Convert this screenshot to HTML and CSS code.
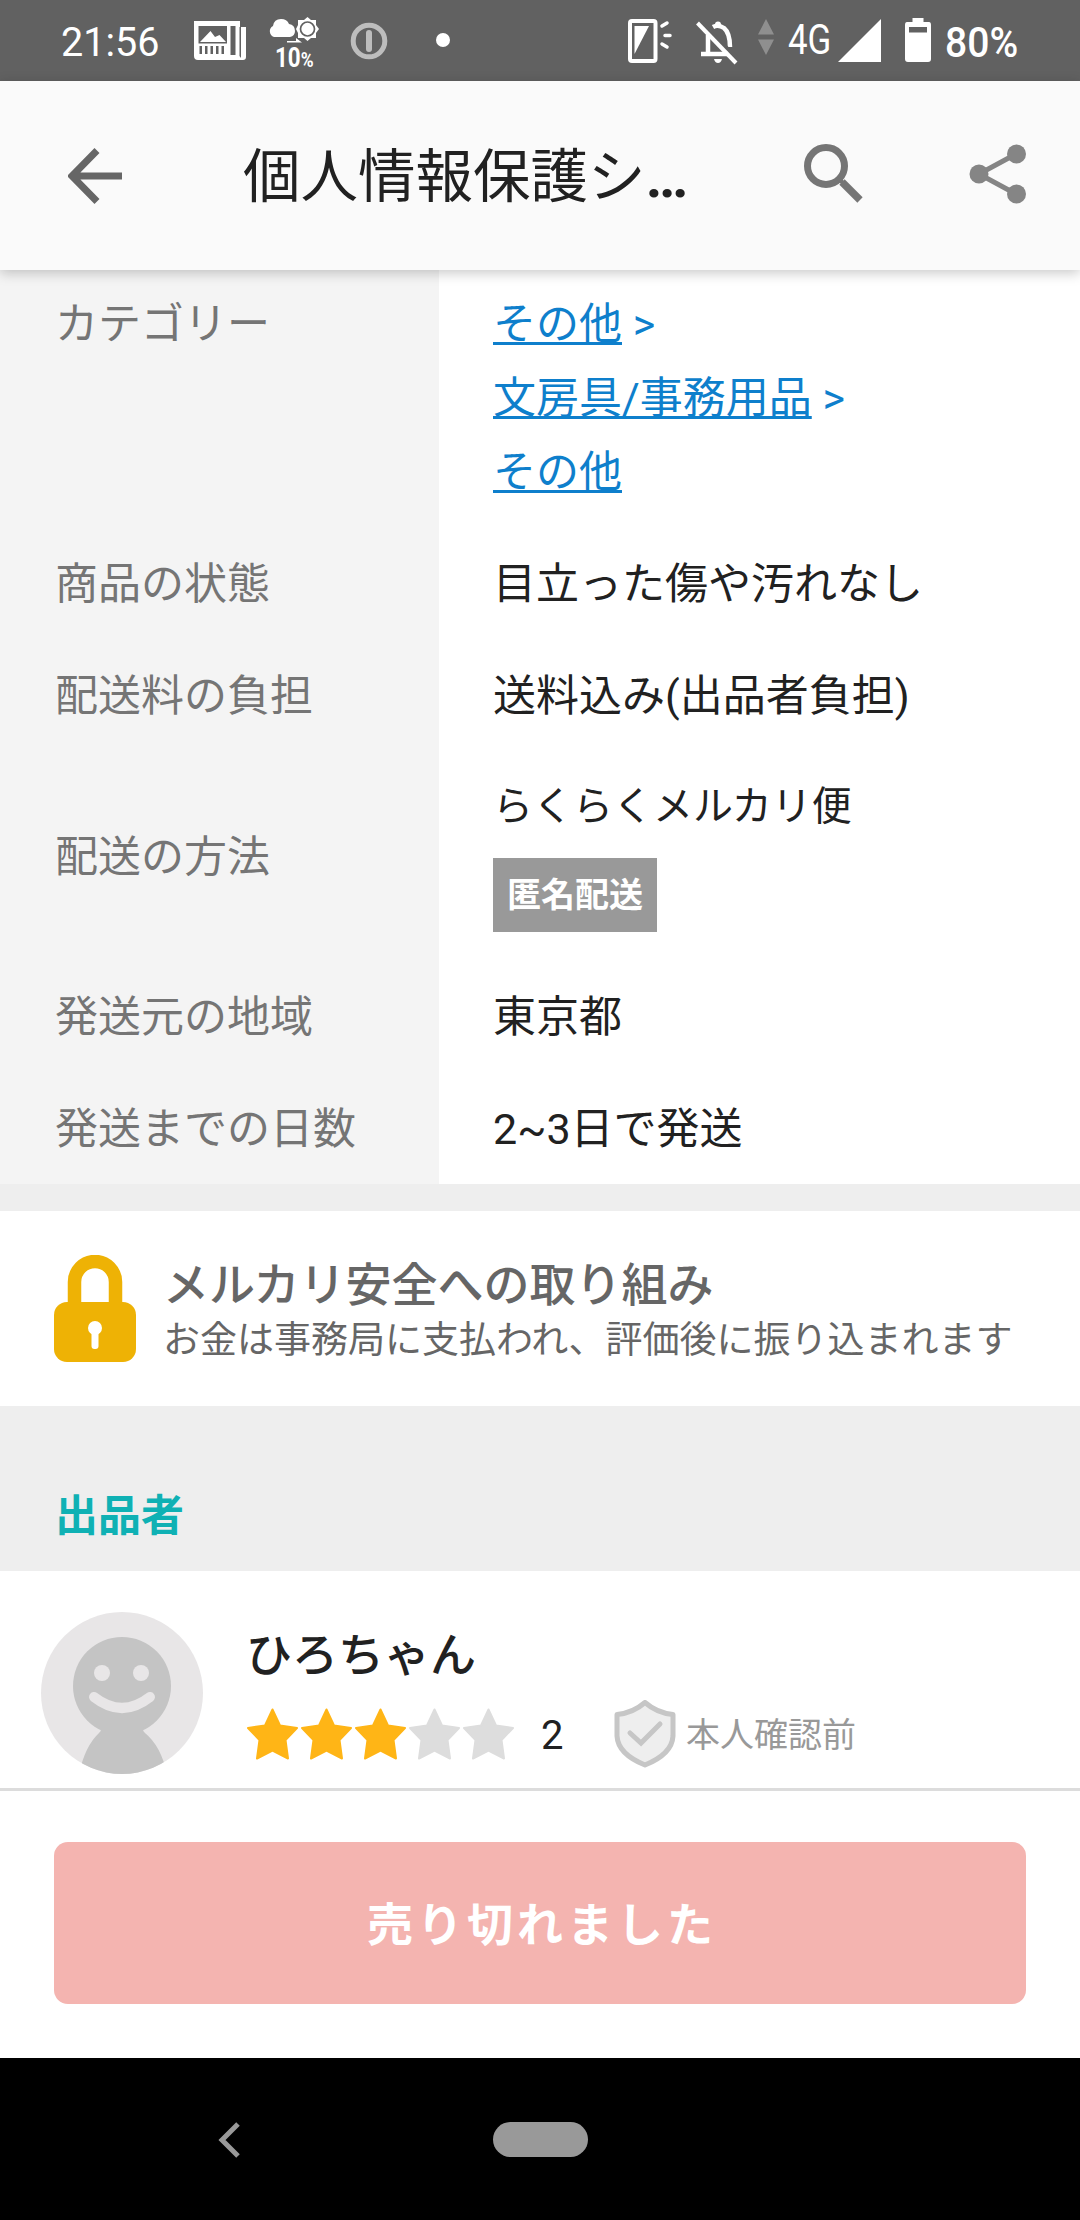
FILE: index.html
```html
<!DOCTYPE html>
<html lang="ja">
<head>
  <meta charset="UTF-8" />
  <meta name="viewport" content="width=device-width, initial-scale=1.0" />
  <title>個人情報保護シ...</title>
  <link rel="stylesheet" href="styles.css">
</head>
<body>

  <div class="status-bar">
    <span class="clock">21:56</span>
    <svg class="icon-news" width="52" height="40" viewBox="0 0 52 40">
      <path fill="#fff" fill-rule="evenodd" d="M0 0H46V6H52V36Q52 39 49 39H4Q0 39 0 35ZM4.500 5V22.500H33V5ZM36.500 5V34H41.500V5ZM45.500 6V35L47 37V6ZM5.500 25V33H8V25ZM11 25V33H13.500V25ZM16.500 25V33H19V25ZM22 25V33H24.500V25ZM27.500 25V33H30V25Z"/>
      <path fill="#fff" d="M6 21L16.500 10L21 16L25.500 14L32 21Z"/>
    </svg>
    <div class="weather">
      <svg width="52" height="27" viewBox="0 0 52 27">
        <path fill="#fff" d="M6 20A6 6 0 0 1 5 9Q6 2 13 2Q19 2 21 7Q27 8 27 14Q27 19 22 20Z"/>
        <path fill="#fff" d="M39.500 0L43 3H48V8L51 12L48 16V21H43L39.500 24L36 21H30V16L28 12L30 8V3H36Z"/>
        <circle cx="39.500" cy="12" r="7" fill="#fff" stroke="#616161" stroke-width="1.700"/>
        <path fill="#fff" d="M19 24H28V21L34 25.500H19Z"/>
      </svg>
      <span class="rain">10<small>%</small></span>
    </div>
    <svg class="icon-key" width="38" height="38" viewBox="0 0 38 38">
      <circle cx="19" cy="19" r="15.800" fill="none" stroke="#bdbdbd" stroke-width="5"/>
      <rect x="16" y="8" width="6" height="22" rx="3" fill="#bdbdbd"/>
    </svg>
    <span class="dot"></span>

    <svg class="icon-phone" width="44" height="44" viewBox="0 0 44 44">
      <rect x="2" y="2" width="25.500" height="40" rx="2" fill="none" stroke="#fff" stroke-width="4"/>
      <path d="M6.500 7H21L6.500 35Z" fill="#fff"/>
      <path d="M34 7L39 4M37 16.500H42M34 25L39 28" stroke="#fff" stroke-width="3.500" stroke-linecap="round"/>
    </svg>
    <svg class="icon-bell" width="42" height="44" viewBox="0 0 42 44">
      <path d="M12 14V34M5 33H32M17 6Q22 3 28 7Q34 12 34 26" fill="none" stroke="#fff" stroke-width="4.500"/>
      <circle cx="22" cy="3.500" r="3" fill="#fff"/>
      <path d="M18 38H26Q25 42 22 42Q19 42 18 38Z" fill="#fff"/>
      <path d="M5 0L42 38" stroke="#616161" stroke-width="3"/>
      <path d="M1.500 2L40 42" stroke="#fff" stroke-width="4"/>
    </svg>
    <svg class="icon-arrows" width="16" height="36" viewBox="0 0 16 36">
      <path d="M8 0L16 15.500H0ZM0 20.500H16L8 36Z" fill="#8f8f8f"/>
    </svg>
    <span class="network">4G</span>
    <svg class="icon-signal" width="43" height="43" viewBox="0 0 43 43">
      <path d="M43 0V43H0Z" fill="#fff"/>
    </svg>
    <svg class="icon-battery" width="26" height="44" viewBox="0 0 26 44">
      <path fill="#fff" fill-rule="evenodd" d="M7.500 0H18.500V4H24Q26 4 26 7V41Q26 44 23 44H3Q0 44 0 41V7Q0 4 2 4H7.500ZM4 9V14.500H22V9Z"/>
    </svg>
    <span class="percent">80%</span>
  </div>

  <header>
    <svg class="back" width="54" height="56" viewBox="0 0 54 56">
      <path d="M54 28H6M29 2.500L4 28L29 53.500" fill="none" stroke="#666" stroke-width="7"/>
    </svg>
    <h1>個人情報保護シ<span class="more">…</span></h1>
    <svg class="search" width="59" height="60" viewBox="0 0 59 60">
      <circle cx="22" cy="22" r="18.500" fill="none" stroke="#757575" stroke-width="7"/>
      <path d="M38 38L56 56" stroke="#757575" stroke-width="7.500"/>
      <path d="M34 34L40 40" stroke="#757575" stroke-width="4"/>
    </svg>
    <svg class="share" width="58" height="60" viewBox="0 0 58 60">
      <path d="M47 10L10 30L47 50" fill="none" stroke="#858585" stroke-width="5"/>
      <circle cx="47.500" cy="10" r="9.500" fill="#858585"/>
      <circle cx="10" cy="30" r="9.500" fill="#858585"/>
      <circle cx="47.500" cy="50" r="9.500" fill="#858585"/>
    </svg>
  </header>

  <main>
    <dl class="details">
      <dt>カテゴリー</dt>
      <dd class="category"><a href="#">その他</a> &gt;<br><a href="#">文房具/事務用品</a> &gt;<br><a href="#">その他</a></dd>
      <dt>商品の状態</dt>
      <dd>目立った傷や汚れなし</dd>
      <dt>配送料の負担</dt>
      <dd>送料込み(出品者負担)</dd>
      <dt class="shipping">配送の方法</dt>
      <dd class="method">
        <p>らくらくメルカリ便</p>
        <span class="badge">匿名配送</span>
      </dd>
      <dt>発送元の地域</dt>
      <dd>東京都</dd>
      <dt>発送までの日数</dt>
      <dd>2~3日で発送</dd>
    </dl>

    <section class="safety">
      <svg width="82" height="107" viewBox="0 0 82 107">
        <path d="M20.500 54V27A20.500 20.500 0 0 1 61.500 27V54" fill="none" stroke="#eeb205" stroke-width="13.500"/>
        <rect y="47" width="82" height="60" rx="13" fill="#eeb205"/>
        <circle cx="41" cy="73" r="7" fill="#fff"/>
        <rect x="37.500" y="74" width="7" height="20" rx="3" fill="#fff"/>
      </svg>
      <div>
        <h2>メルカリ安全への取り組み</h2>
        <p>お金は事務局に支払われ、評価後に振り込まれます</p>
      </div>
    </section>

    <h3 class="seller-title">出品者</h3>

    <section class="seller">
      <svg class="avatar" width="162" height="162" viewBox="0 0 162 162">
        <defs>
          <clipPath id="round"><circle cx="81" cy="81" r="81"/></clipPath>
          <path id="star" d="M25.500 1.500L33 17.500L50 20L38.500 32L41 50.500L25.500 42.500L10 50.500L12.500 32L1 20L18 17.500Z" stroke-width="2" stroke-linejoin="round"/>
        </defs>
        <circle cx="81" cy="81" r="81" fill="#e8e6e7"/>
        <g clip-path="url(#round)" fill="#c4c4c4">
          <circle cx="81" cy="74" r="49"/>
          <path d="M56 112Q63 116 58 121Q44 134 38 162H126Q120 134 104 121Q99 116 106 112Z"/>
        </g>
        <circle cx="61" cy="61" r="8" fill="#e8e6e7"/>
        <circle cx="100" cy="61" r="8" fill="#e8e6e7"/>
        <path d="M53 85Q81 107 109 85" fill="none" stroke="#e8e6e7" stroke-width="10" stroke-linecap="round"/>
      </svg>
      <div>
        <p class="name">ひろちゃん</p>
        <div class="rating">
          <svg width="268" height="52" viewBox="0 0 268 52">
            <g fill="#ffb516" stroke="#ffb516">
              <use href="#star"/>
              <use href="#star" x="54"/>
              <use href="#star" x="108"/>
            </g>
            <g fill="#ddd" stroke="#ddd">
              <use href="#star" x="162"/>
              <use href="#star" x="216"/>
            </g>
          </svg>
          <span class="count">2</span>
          <svg class="shield" width="62" height="68" viewBox="0 0 62 68">
            <path d="M31 2.500Q43 13 59 14.500V36Q58 54 31 65Q4 54 3 36V14.500Q19 13 31 2.500Z" fill="#eee" stroke="#c6c6c6" stroke-width="5" stroke-linejoin="round"/>
            <path d="M16 33L27 43L46 24" fill="none" stroke="#c6c6c6" stroke-width="5" stroke-linecap="round"/>
          </svg>
          <span class="identity">本人確認前</span>
        </div>
      </div>
    </section>
  </main>

  <div class="buy-bar">
    <button type="button" disabled>売り切れました</button>
  </div>

  <footer>
    <svg width="22" height="36" viewBox="0 0 22 36">
      <path d="M20 2L4 18L20 34" fill="none" stroke="#999" stroke-width="5"/>
    </svg>
    <span class="home"></span>
  </footer>

</body>
</html>
```
FILE: styles.css
```css
* {
  margin: 0;
  padding: 0;
  box-sizing: border-box;
}

body {
  width: 1080px;
  height: 2220px;
  display: flex;
  flex-direction: column;
  overflow: hidden;
  background: #fff;
  color: #212121;
  font-family: Roboto, 'Noto Sans CJK JP', sans-serif;
  font-size: 43px;
}

svg {
  display: block;
  flex-shrink: 0;
}

/* Status bar */
.status-bar {
  flex: 0 0 81px;
  display: flex;
  align-items: flex-start;
  background: #616161;
  color: #fff;
  line-height: 48px;
  white-space: nowrap;
}

.clock {
  width: 133px;
  margin: 18px 0 0 61px;
  font-size: 41px;
  transform: scaleX(.965);
  transform-origin: left;
}

.icon-news {
  margin-top: 21px;
}

.weather {
  width: 52px;
  margin: 17px 0 0 22px;
}

.rain {
  display: block;
  margin: 1px 0 0 7px;
  font-size: 27px;
  font-weight: 700;
  line-height: 26px;
  transform: scaleX(.83);
  transform-origin: left;
}

.rain small {
  font-size: 21px;
}

.icon-key {
  margin: 22px 0 0 30px;
}

.dot {
  width: 14px;
  height: 14px;
  margin: 33px 178px 0 48px;
  border-radius: 50%;
  background: #fff;
}

.icon-phone {
  margin-top: 19px;
}

.icon-bell {
  margin: 21px 0 0 24px;
}

.icon-arrows {
  margin: 19px 0 0 20px;
}

.network {
  width: 50px;
  margin: 16px 0 0 14px;
  font-size: 42px;
  transform: scaleX(.83);
  transform-origin: left;
}

.icon-signal {
  margin-top: 19px;
}

.icon-battery {
  margin: 18px 0 0 24px;
}

.percent {
  margin: 19px 0 0 14px;
  font-size: 42px;
  font-weight: 500;
  transform: scaleX(.93);
  transform-origin: left;
}

/* App header */
header {
  flex: 0 0 189px;
  display: flex;
  align-items: flex-start;
  position: relative;
  z-index: 1;
  padding: 63px 53px 0 68px;
  background: #fafafa;
  box-shadow: 0 3px 12px rgba(0, 0, 0, 0.22);
}

.back {
  margin-top: 4px;
}

h1 {
  width: 562px;
  margin: -8px 0 0 121px;
  font-size: 57.5px;
  font-weight: 400;
  line-height: 84px;
  white-space: nowrap;
}

.more {
  font-weight: 700;
}

.share {
  margin-left: 106px;
}

/* Item details */
main {
  flex: 0 0 1518px;
}

.details {
  display: grid;
  grid-template-columns: 439px 1fr;
  margin-top: -3px;
  line-height: 74px;
}

dt {
  padding: 20px 0 18px 55px;
  background: #f4f4f4;
  color: #757575;
}

dd {
  padding: 20px 0 18px 54px;
}

.category {
  color: #0e7fcc;
}

.category a {
  color: #0e7fcc;
  text-decoration-thickness: 3px;
  text-underline-offset: 3px;
}

.shipping {
  display: flex;
  align-items: center;
}

.method {
  padding-bottom: 28px;
}

.method p {
  height: 87px;
  font-size: 40px;
  line-height: 72px;
}

.badge {
  display: block;
  width: 164px;
  height: 74px;
  background: #999;
  color: #fff;
  font-size: 34px;
  font-weight: 700;
  text-align: center;
}

/* Safety notice */
.safety {
  height: 222px;
  display: flex;
  padding: 44px 0 0 54px;
  border-top: 27px solid #eee;
  color: #666;
  white-space: nowrap;
}

.safety div {
  margin: 2px 0 0 27px;
}

.safety h2 {
  font-size: 46px;
  font-weight: 500;
  line-height: 56px;
}

.safety p {
  font-size: 37px;
  line-height: 56px;
}

/* Seller */
.seller-title {
  height: 165px;
  padding: 80px 0 0 55px;
  background: #eee;
  color: #0fb1b4;
  font-size: 43px;
  font-weight: 700;
  line-height: 60px;
}

.seller {
  display: flex;
  padding: 41px 0 0 41px;
}

.seller > div {
  margin-left: 43px;
}

.name {
  height: 87px;
  padding-top: 11px;
  font-size: 46px;
  font-weight: 500;
  line-height: 64px;
}

.rating {
  display: flex;
  align-items: center;
  height: 70px;
  margin-left: 1px;
}

.count {
  width: 73px;
  margin-left: 26px;
  padding-top: 2px;
  font-size: 40px;
}

.identity {
  margin: 0 0 3px 10px;
  color: #999;
  font-size: 34px;
}

/* Sold out button */
.buy-bar {
  flex: 0 0 270px;
  padding: 51px 54px 54px;
  border-top: 3px solid #dcdcdc;
}

.buy-bar button {
  width: 100%;
  height: 162px;
  padding: 0 0 5px 4px;
  border: none;
  border-radius: 14px;
  background: #f4b4b0;
  color: #fff;
  font-family: inherit;
  font-size: 46px;
  font-weight: 700;
  letter-spacing: 4px;
}

/* Navigation bar */
footer {
  flex: 1;
  display: flex;
  padding: 64px 0 0 218px;
  background: #000;
}

.home {
  width: 95px;
  height: 35px;
  margin-left: 253px;
  border-radius: 18px;
  background: #999;
}
```
